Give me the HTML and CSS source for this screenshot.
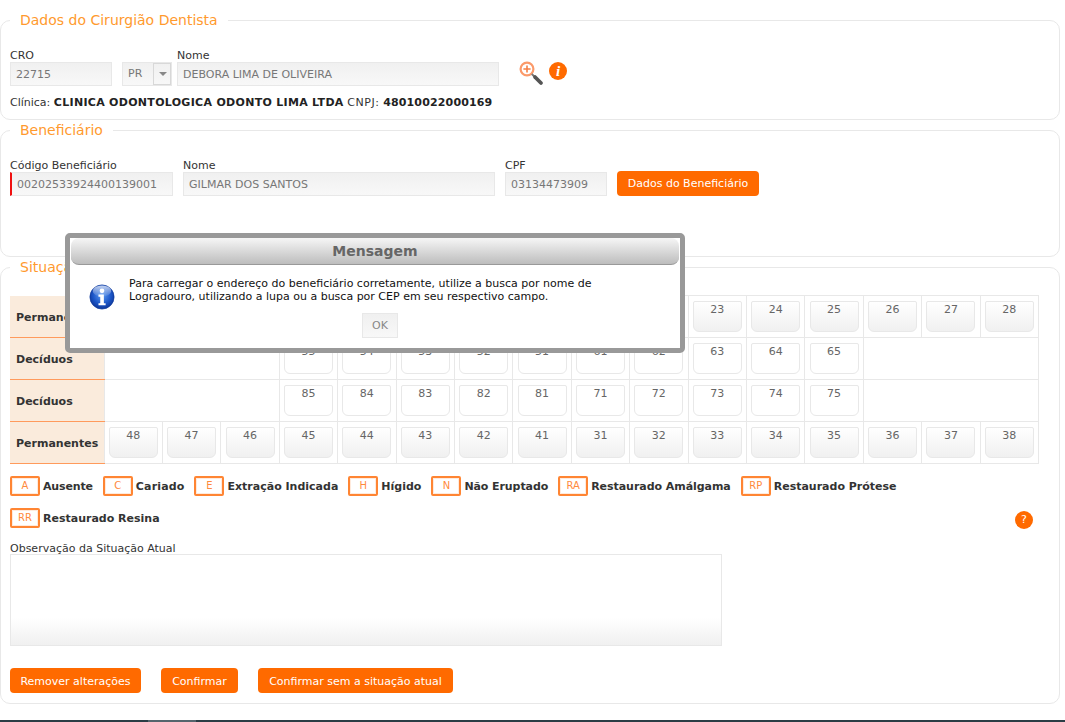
FILE: index.html
```html
<!DOCTYPE html>
<html lang="pt-BR">
<head>
<meta charset="utf-8">
<title>Situação Atual</title>
<link rel="stylesheet" href="styles.css">
</head>
<body>
<main class="page">
  <fieldset class="panel panel-cd">
    <legend>Dados do Cirurgião Dentista</legend>
    <div class="row">
      <div class="field f-cro"><label>CRO</label><input class="inp" readonly value="22715"></div>
      <div class="field f-uf"><label>&nbsp;</label>
        <div class="select"><span class="select-val">PR</span><span class="select-btn"><i class="caret"></i></span></div>
      </div>
      <div class="field f-nome"><label>Nome</label><input class="inp" readonly value="DEBORA LIMA DE OLIVEIRA"></div>
      <svg class="ico-search" width="26" height="26" viewBox="0 0 26 26">
        <circle cx="8" cy="9" r="6.4" fill="#fff" stroke="#fb9a6a" stroke-width="2.2"/>
        <path d="M8 5.4v7.2M4.4 9h7.2" stroke="#f57f45" stroke-width="1.6"/>
        <path d="M12.8 14l2.6 2.6" stroke="#777" stroke-width="2"/>
        <path d="M16 17l6 6" stroke="#555" stroke-width="3.8" stroke-linecap="round"/>
      </svg>
      <span class="ico-info">i</span>
    </div>
    <p class="clinic">Clínica: <b class="clinic-name">CLINICA ODONTOLOGICA ODONTO LIMA LTDA</b> <span class="clinic-cnpj">CNPJ:</span> <b class="clinic-num">48010022000169</b></p>
  </fieldset>

  <fieldset class="panel panel-ben">
    <legend>Beneficiário</legend>
    <div class="row">
      <div class="field f-cod"><label>Código Beneficiário</label><input class="inp inp-req" readonly value="00202533924400139001"></div>
      <div class="field f-ben"><label>Nome</label><input class="inp" readonly value="GILMAR DOS SANTOS"></div>
      <div class="field f-cpf"><label>CPF</label><input class="inp" readonly value="03134473909"></div>
      <button class="btn btn-dados" type="button">Dados do Beneficiário</button>
    </div>
  </fieldset>

  <fieldset class="panel panel-sit">
    <legend>Situação Atual</legend>
    <table class="teeth">
      <tr>
        <th>Permanentes</th>
        <td><button class="tooth">18</button></td><td><button class="tooth">17</button></td><td><button class="tooth">16</button></td><td><button class="tooth">15</button></td><td><button class="tooth">14</button></td><td><button class="tooth">13</button></td><td><button class="tooth">12</button></td><td><button class="tooth">11</button></td><td><button class="tooth">21</button></td><td><button class="tooth">22</button></td><td><button class="tooth">23</button></td><td><button class="tooth">24</button></td><td><button class="tooth">25</button></td><td><button class="tooth">26</button></td><td><button class="tooth">27</button></td><td><button class="tooth">28</button></td>
      </tr>
      <tr>
        <th>Decíduos</th>
        <td colspan="3"></td>
        <td><button class="tooth milk">55</button></td><td><button class="tooth milk">54</button></td><td><button class="tooth milk">53</button></td><td><button class="tooth milk">52</button></td><td><button class="tooth milk">51</button></td><td><button class="tooth milk">61</button></td><td><button class="tooth milk">62</button></td><td><button class="tooth milk">63</button></td><td><button class="tooth milk">64</button></td><td><button class="tooth milk">65</button></td>
        <td colspan="3"></td>
      </tr>
      <tr>
        <th>Decíduos</th>
        <td colspan="3"></td>
        <td><button class="tooth milk">85</button></td><td><button class="tooth milk">84</button></td><td><button class="tooth milk">83</button></td><td><button class="tooth milk">82</button></td><td><button class="tooth milk">81</button></td><td><button class="tooth milk">71</button></td><td><button class="tooth milk">72</button></td><td><button class="tooth milk">73</button></td><td><button class="tooth milk">74</button></td><td><button class="tooth milk">75</button></td>
        <td colspan="3"></td>
      </tr>
      <tr>
        <th>Permanentes</th>
        <td><button class="tooth">48</button></td><td><button class="tooth">47</button></td><td><button class="tooth">46</button></td><td><button class="tooth">45</button></td><td><button class="tooth">44</button></td><td><button class="tooth">43</button></td><td><button class="tooth">42</button></td><td><button class="tooth">41</button></td><td><button class="tooth">31</button></td><td><button class="tooth">32</button></td><td><button class="tooth">33</button></td><td><button class="tooth">34</button></td><td><button class="tooth">35</button></td><td><button class="tooth">36</button></td><td><button class="tooth">37</button></td><td><button class="tooth">38</button></td>
      </tr>
    </table>

    <ul class="key">
      <li class="k-a"><span class="code">A</span><b>Ausente</b></li>
      <li class="k-c"><span class="code">C</span><b>Cariado</b></li>
      <li><span class="code">E</span><b>Extração Indicada</b></li>
      <li><span class="code">H</span><b>Hígido</b></li>
      <li class="k-n"><span class="code">N</span><b>Não Eruptado</b></li>
      <li class="k-ra"><span class="code">RA</span><b>Restaurado Amálgama</b></li>
      <li><span class="code">RP</span><b>Restaurado Prótese</b></li>
      <li><span class="code">RR</span><b>Restaurado Resina</b></li>
      <li class="key-help"><span class="ico-help">?</span></li>
    </ul>

    <label class="obs-label">Observação da Situação Atual</label>
    <textarea class="obs"></textarea>

    <div class="actions">
      <button class="btn btn-rem" type="button">Remover alterações</button>
      <button class="btn btn-conf" type="button">Confirmar</button>
      <button class="btn btn-sem" type="button">Confirmar sem a situação atual</button>
    </div>
  </fieldset>
</main>
<footer class="bottom"><span class="bottom-seg"></span></footer>

<div class="modal" role="dialog">
  <h2 class="modal-title">Mensagem</h2>
  <div class="modal-body">
    <svg class="ico-blue" width="26" height="26" viewBox="0 0 28 28">
      <defs>
        <radialGradient id="blueBall" cx="50%" cy="42%" r="62%">
          <stop offset="0" stop-color="#5d9bf2"/>
          <stop offset=".6" stop-color="#1c56c8"/>
          <stop offset="1" stop-color="#0b2f8e"/>
        </radialGradient>
        <linearGradient id="blueShine" x1="0" y1="0" x2="0" y2="1">
          <stop offset="0" stop-color="#fff" stop-opacity=".75"/>
          <stop offset="1" stop-color="#fff" stop-opacity=".05"/>
        </linearGradient>
      </defs>
      <circle cx="14" cy="14" r="13" fill="url(#blueBall)" stroke="#0d3a9c" stroke-width=".8"/>
      <ellipse cx="14" cy="7.5" rx="10" ry="6" fill="url(#blueShine)"/>
      <circle cx="14" cy="7.4" r="2.5" fill="#fff"/>
      <path d="M10.2 11.4h5.8v9.2h1.9v2.2h-7.7v-2.2h1.9v-7h-1.9z" fill="#fff"/>
    </svg>
    <p class="modal-text">Para carregar o endereço do beneficiário corretamente, utilize a busca por nome de Logradouro, utilizando a lupa ou a busca por CEP em seu respectivo campo.</p>
  </div>
  <div class="modal-foot"><button class="modal-ok" type="button">OK</button></div>
</div>
</body>
</html>
```
FILE: styles.css
```css
* { box-sizing: border-box; }
html, body { margin: 0; padding: 0; height: 722px; overflow: hidden; background: #fff; }
body {
  font-family: "DejaVu Sans", Verdana, sans-serif;
  font-size: 11px;
  line-height: 13px;
  color: #333;
  position: relative;
}
.page { width: 1060px; display: flex; flex-direction: column; gap: 2px; padding-top: 12px; }

.panel {
  margin: 0;
  min-width: 0;
  border: 1px solid #e8e8e8;
  border-radius: 10px;
  padding: 0 9px;
}
.panel legend {
  padding: 0 10px;
  font-size: 14px;
  line-height: 17px;
  color: #ff9a2e;
}
.panel-cd { height: 108px; padding-top: 20px; }
.panel-ben { height: 135px; padding-top: 20px; }
.panel-sit { height: 445px; padding-top: 19px; }

.row { display: flex; align-items: flex-start; }
.field { display: flex; flex-direction: column; }
.field label { height: 13px; display: block; }

.inp {
  display: block;
  height: 24px;
  padding: 0 5px;
  border: 1px solid #e8e8e8;
  background: linear-gradient(#f0f0f0, #f8f8f8);
  font: 11px/22px "DejaVu Sans", Verdana, sans-serif;
  color: #777;
  outline: 0;
  width: 100%;
}
.inp-req { border-left: 2px solid #f01010; padding-left: 5px; }

.f-cro { width: 102px; margin-right: 10px; }
.f-uf { width: 50px; margin-right: 5px; }
.f-nome { width: 322px; margin-right: 20px; }
.select { display: flex; height: 24px; border: 1px solid #e8e8e8; background: linear-gradient(#f0f0f0, #f8f8f8); color: #777; }
.select-val { flex: 1; padding-left: 5px; line-height: 22px; }
.select-btn { width: 18px; border: 1px solid #d0d0d0; border-width: 0 0 0 1px; display: flex; align-items: center; justify-content: center; outline: 1px solid #d8d8d8; outline-offset: -1px; }
.caret { width: 0; height: 0; border: 4px solid transparent; border-top: 4px solid #888; border-bottom: 0; }

.ico-search { display: block; margin-top: 11px; }
.ico-info {
  width: 18px; height: 18px; border-radius: 50%;
  margin: 13px 0 0 4px;
  background: #ff6a00; color: #fff;
  font: italic bold 15px/18px "Liberation Serif", serif;
  text-align: center;
}
.clinic { margin: 10px 0 0; line-height: 13px; }
.clinic b { color: #222; }
.clinic-name { letter-spacing: .3px; }
.clinic-cnpj { letter-spacing: .6px; }
.clinic-num { letter-spacing: .15px; }

.f-cod { width: 163px; margin-right: 10px; }
.f-ben { width: 312px; margin-right: 10px; }
.f-cpf { width: 102px; margin-right: 10px; }

.btn {
  height: 25px;
  padding: 0;
  border: 0;
  border-radius: 4px;
  background: #ff6a00;
  color: #fff;
  font: 11px/25px "DejaVu Sans", Verdana, sans-serif;
  text-align: center;
}
.btn-dados { width: 142px; margin-top: 12px; }

.teeth { border-collapse: collapse; table-layout: fixed; width: 1029px; margin-top: 0; }
.teeth th {
  width: 94px;
  height: 42px;
  padding: 2px 0 0 6px;
  background: #faebdc;
  border-bottom: 1px solid #ff9a5c;
  text-align: left;
  font-weight: bold;
  color: #333;
}
.teeth td { border: 1px solid #e8e8e8; padding: 0; text-align: center; vertical-align: middle; height: 42px; }
.tooth {
  display: block;
  width: 49px;
  height: 31px;
  margin: 0 auto;
  padding: 0 0 13px;
  border: 1px solid #e8e8e8;
  border-radius: 2px 2px 6px 6px;
  background: linear-gradient(#fff, #f0f0f0);
  font: 11px/14px "DejaVu Sans", Verdana, sans-serif;
  color: #666;
}
.tooth.milk { background: #fff; }

.key { list-style: none; margin: 12px 0 0; padding: 0; display: flex; flex-wrap: wrap; column-gap: 10px; row-gap: 12px; }
.key li { display: flex; align-items: center; gap: 3px; height: 20px; }
.key b { color: #333; }
.key .k-a b { letter-spacing: -.15px; }
.key .k-c b { letter-spacing: .15px; }
.key .k-n b { letter-spacing: -.08px; }
.key .k-ra b { letter-spacing: -.05px; }
.code {
  width: 30px; height: 20px;
  border: 2px solid #ff8533;
  border-radius: 2px;
  box-shadow: inset 0 0 0 1px #ffeadc;
  color: #ff8a3d;
  font-size: 10px;
  line-height: 16px;
  text-align: center;
}
.key li.key-help { margin-left: auto; margin-right: 17px; }
.ico-help {
  width: 18px; height: 18px; border-radius: 50%;
  margin-top: 3px;
  background: #ff6a00; color: #fff;
  font-size: 11px; line-height: 18px; text-align: center;
}
.obs-label { display: block; margin-top: 14px; height: 12px; }
.obs {
  display: block;
  width: 712px;
  height: 92px;
  margin: 0;
  padding: 0;
  border: 1px solid #e8e8e8;
  background: linear-gradient(#fff 70%, #f0f0f0);
  resize: none;
  outline: 0;
}
.actions { display: flex; margin-top: 22px; }
.actions .btn { padding-top: 1px; }
.btn-rem { width: 131px; margin-right: 20px; }
.btn-conf { width: 77px; margin-right: 20px; }
.btn-sem { width: 195px; }

.bottom { position: absolute; left: 0; right: 0; top: 720px; height: 2px; background: #2b3d45; }
.bottom-seg { display: block; width: 48px; height: 2px; margin-left: 148px; background: #55656d; }

.modal {
  position: absolute;
  left: 65px; top: 233px;
  width: 620px; height: 120px;
  border: 5px solid #999;
  border-radius: 5px;
  background: #fff;
  color: #111;
}
.modal-title {
  margin: 0 1px;
  height: 27px;
  border-bottom: 1px solid #999;
  border-radius: 8px;
  background: linear-gradient(#f6f6f6, #bdbdbd);
  font-size: 14px;
  line-height: 26px;
  font-weight: bold;
  color: #666;
  text-align: center;
}
.modal-body { display: flex; align-items: flex-start; padding: 12px 0 0 19px; }
.ico-blue { flex: none; margin: 7px 14px 0 0; }
.modal-text { margin: 0; width: 490px; line-height: 13px; color: #111; }
.modal-foot { display: flex; justify-content: center; margin-top: 3px; padding-left: 10px; }
.modal-ok {
  width: 36px; height: 25px;
  padding: 0;
  border: 1px solid #e8e8e8;
  background: linear-gradient(#f0f0f0, #f8f8f8);
  color: #888;
  font: 11px/23px "DejaVu Sans", Verdana, sans-serif;
}
```
